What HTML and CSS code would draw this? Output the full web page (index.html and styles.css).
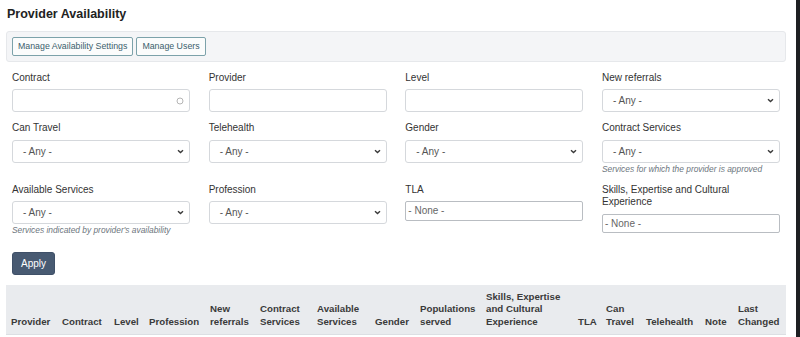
FILE: index.html
```html
<!DOCTYPE html>
<html lang="en">
<head>
<meta charset="utf-8">
<title>Provider Availability</title>
<link rel="stylesheet" href="styles.css">
</head>
<body>
<div class="window">
  <main class="page">
    <h1 class="title">Provider Availability</h1>
    <div class="toolbar">
      <button class="tool-btn">Manage Availability Settings</button>
      <button class="tool-btn">Manage Users</button>
    </div>
    <form class="filters">
      <div class="field">
        <label class="label">Contract</label>
        <div class="input">
          <svg class="spin" width="8" height="8" viewBox="0 0 8 8"><circle cx="4" cy="4" r="3" fill="none" stroke="#b5b5b5" stroke-width="1"/></svg>
        </div>
      </div>
      <div class="field">
        <label class="label">Provider</label>
        <div class="input"></div>
      </div>
      <div class="field">
        <label class="label">Level</label>
        <div class="input"></div>
      </div>
      <div class="field">
        <label class="label">New referrals</label>
        <div class="select"><span>- Any -</span><svg class="chev" width="7" height="5" viewBox="0 0 7 5"><path d="M1 1.2 L3.5 3.6 L6 1.2" fill="none" stroke="#3a3a3a" stroke-width="1.4"/></svg></div>
      </div>

      <div class="field">
        <label class="label">Can Travel</label>
        <div class="select"><span>- Any -</span><svg class="chev" width="7" height="5" viewBox="0 0 7 5"><path d="M1 1.2 L3.5 3.6 L6 1.2" fill="none" stroke="#3a3a3a" stroke-width="1.4"/></svg></div>
      </div>
      <div class="field">
        <label class="label">Telehealth</label>
        <div class="select"><span>- Any -</span><svg class="chev" width="7" height="5" viewBox="0 0 7 5"><path d="M1 1.2 L3.5 3.6 L6 1.2" fill="none" stroke="#3a3a3a" stroke-width="1.4"/></svg></div>
      </div>
      <div class="field">
        <label class="label">Gender</label>
        <div class="select"><span>- Any -</span><svg class="chev" width="7" height="5" viewBox="0 0 7 5"><path d="M1 1.2 L3.5 3.6 L6 1.2" fill="none" stroke="#3a3a3a" stroke-width="1.4"/></svg></div>
      </div>
      <div class="field">
        <label class="label">Contract Services</label>
        <div class="select"><span>- Any -</span><svg class="chev" width="7" height="5" viewBox="0 0 7 5"><path d="M1 1.2 L3.5 3.6 L6 1.2" fill="none" stroke="#3a3a3a" stroke-width="1.4"/></svg></div>
        <p class="help">Services for which the provider is approved</p>
      </div>

      <div class="field">
        <label class="label">Available Services</label>
        <div class="select"><span>- Any -</span><svg class="chev" width="7" height="5" viewBox="0 0 7 5"><path d="M1 1.2 L3.5 3.6 L6 1.2" fill="none" stroke="#3a3a3a" stroke-width="1.4"/></svg></div>
        <p class="help">Services indicated by provider's availability</p>
      </div>
      <div class="field">
        <label class="label">Profession</label>
        <div class="select"><span>- Any -</span><svg class="chev" width="7" height="5" viewBox="0 0 7 5"><path d="M1 1.2 L3.5 3.6 L6 1.2" fill="none" stroke="#3a3a3a" stroke-width="1.4"/></svg></div>
      </div>
      <div class="field">
        <label class="label">TLA</label>
        <div class="multi">- None -</div>
      </div>
      <div class="field">
        <label class="label">Skills, Expertise and Cultural Experience</label>
        <div class="multi">- None -</div>
      </div>
    </form>
    <div class="actions">
      <button class="apply">Apply</button>
    </div>
    <table class="results">
      <colgroup>
        <col class="c-provider"><col class="c-contract"><col class="c-level"><col class="c-profession">
        <col class="c-new"><col class="c-cservices"><col class="c-aservices"><col class="c-gender">
        <col class="c-pop"><col class="c-skills"><col class="c-tla"><col class="c-travel">
        <col class="c-tele"><col class="c-note"><col class="c-last">
      </colgroup>
      <thead>
        <tr>
          <th>Provider</th>
          <th>Contract</th>
          <th>Level</th>
          <th>Profession</th>
          <th>New referrals</th>
          <th>Contract Services</th>
          <th>Available Services</th>
          <th>Gender</th>
          <th>Populations served</th>
          <th>Skills, Expertise and Cultural Experience</th>
          <th>TLA</th>
          <th>Can Travel</th>
          <th>Telehealth</th>
          <th>Note</th>
          <th>Last Changed</th>
        </tr>
      </thead>
    </table>
  </main>
  <aside class="side"></aside>
</div>
</body>
</html>
```
FILE: styles.css
```css
* { box-sizing: border-box; }
html, body { margin: 0; padding: 0; }
body {
  font-family: "Liberation Sans", Arial, sans-serif;
  color: #333;
  background: #fff;
  overflow: hidden;
}
.window {
  display: flex;
  width: 800px;
  height: 337px;
}
.page {
  width: 796px;
  flex: none;
  padding: 0 10px 0 6px;
}
.side {
  flex: 1;
  background: #1e1f22;
}
.title {
  margin: 0;
  padding: 7px 0 0 1px;
  font-size: 12.5px;
  line-height: 15px;
  font-weight: bold;
  color: #222;
  height: 31px;
}
.toolbar {
  display: flex;
  gap: 3px;
  background: #f4f5f7;
  border: 1px solid #e6e8eb;
  border-radius: 3px;
  padding: 5px 5px;
  height: 31px;
}
.tool-btn {
  font-family: inherit;
  font-size: 8.8px;
  color: #3b5f6c;
  background: #fbfcfc;
  border: 1px solid #7ca2aa;
  border-radius: 2px;
  height: 19px;
  padding: 0 5px;
  line-height: 17px;
}
.filters {
  display: grid;
  grid-template-columns: repeat(4, 178px);
  column-gap: 18.67px;
  row-gap: 10px;
  padding: 10px 6px 0;
  margin: 0;
}
.field {
  display: flex;
  flex-direction: column;
}
.label {
  font-size: 10px;
  line-height: 12.4px;
  color: #333;
  margin-bottom: 5px;
}
.input, .select {
  height: 23px;
  border: 1px solid #d5d8dc;
  border-radius: 3px;
  background: #fff;
  display: flex;
  align-items: center;
  justify-content: space-between;
  padding: 0 5px 0 10px;
  font-size: 10px;
  color: #555;
}
.input { justify-content: flex-end; padding-right: 5px; }
.spin { display: block; }
.chev { display: block; margin-right: 0; }
.multi {
  height: 19.5px;
  border: 1px solid #b9bdc2;
  border-radius: 2px;
  background: #fff;
  font-size: 10px;
  color: #666;
  line-height: 17.5px;
  padding: 0 2px;
}
.help {
  margin: 1px 0 0;
  font-size: 8.4px;
  line-height: 10px;
  font-style: italic;
  color: #6c757d;
}
.actions {
  padding: 17px 6px 10px;
}
.apply {
  display: block;
  font-family: inherit;
  font-size: 10px;
  color: #fff;
  background: #485a72;
  border: 1px solid #3f5068;
  border-radius: 3px;
  height: 23px;
  padding: 0 8px;
}
.results {
  width: 780px;
  table-layout: fixed;
  border-collapse: collapse;
}
.results th {
  background: #e9ebee;
  border-bottom: 1px solid #dcdfe3;
  text-align: left;
  vertical-align: bottom;
  font-size: 9.7px;
  line-height: 12.2px;
  font-weight: bold;
  color: #3a3a3a;
  padding: 6px 2px 6px 5px;
}
.c-provider { width: 51px; }
.c-contract { width: 52px; }
.c-level { width: 35px; }
.c-profession { width: 61px; }
.c-new { width: 50px; }
.c-cservices { width: 57px; }
.c-aservices { width: 58px; }
.c-gender { width: 45px; }
.c-pop { width: 66px; }
.c-skills { width: 92px; }
.c-tla { width: 28px; }
.c-travel { width: 40px; }
.c-tele { width: 59px; }
.c-note { width: 33px; }
.c-last { width: 53px; }
```
